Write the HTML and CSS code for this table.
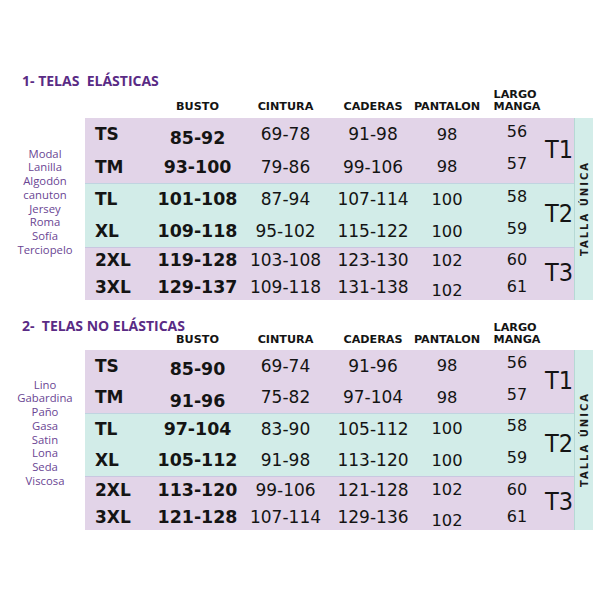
FILE: index.html
```html
<!DOCTYPE html>
<html lang="es">
<head>
<meta charset="utf-8">
<title>Tabla de tallas</title>
<link rel="stylesheet" href="styles.css">
</head>
<body>
<main class="page">
  <section class="sec sec-1">
    <h2 class="title">1-&nbsp;TELAS&nbsp; ELÁSTICAS</h2>
    <div class="sheet">
      <div class="thead">
        <span class="cell c-size"></span>
        <span class="cell c-busto h">BUSTO</span>
        <span class="cell c-cint h">CINTURA</span>
        <span class="cell c-cad h">CADERAS</span>
        <span class="cell c-pant h">PANTALON</span>
        <span class="cell c-largo h"><span class="two">LARGO<br>MANGA</span></span>
        <span class="cell c-t"></span>
      </div>
      <ul class="fabrics">
        <li>Modal</li><li>Lanilla</li><li>Algodón</li><li>canuton</li><li>Jersey</li><li>Roma</li><li>Sofía</li><li>Terciopelo</li>
      </ul>
      <div class="tbody">
        <div class="group g1 purple">
          <span class="cell c-t tl">T1</span>
          <span class="cell c-size">TS</span><span class="cell c-busto low5">85-92</span><span class="cell c-cint">69-78</span><span class="cell c-cad">91-98</span><span class="cell c-pant">98</span><span class="cell c-largo">56</span>
          <span class="cell c-size">TM</span><span class="cell c-busto">93-100</span><span class="cell c-cint">79-86</span><span class="cell c-cad">99-106</span><span class="cell c-pant">98</span><span class="cell c-largo">57</span>
        </div>
        <div class="group g2 teal">
          <span class="cell c-t tl">T2</span>
          <span class="cell c-size">TL</span><span class="cell c-busto">101-108</span><span class="cell c-cint">87-94</span><span class="cell c-cad">107-114</span><span class="cell c-pant">100</span><span class="cell c-largo">58</span>
          <span class="cell c-size">XL</span><span class="cell c-busto">109-118</span><span class="cell c-cint">95-102</span><span class="cell c-cad">115-122</span><span class="cell c-pant">100</span><span class="cell c-largo">59</span>
        </div>
        <div class="group g3 purple">
          <span class="cell c-t tl">T3</span>
          <span class="cell c-size">2XL</span><span class="cell c-busto">119-128</span><span class="cell c-cint">103-108</span><span class="cell c-cad">123-130</span><span class="cell c-pant">102</span><span class="cell c-largo">60</span>
          <span class="cell c-size">3XL</span><span class="cell c-busto">129-137</span><span class="cell c-cint">109-118</span><span class="cell c-cad">131-138</span><span class="cell c-pant low4">102</span><span class="cell c-largo">61</span>
        </div>
      </div>
      <div class="band"><span class="band-text">TALLA ÚNICA</span></div>
    </div>
  </section>

  <section class="sec sec-2">
    <h2 class="title">2-&nbsp; TELAS NO ELÁSTICAS</h2>
    <div class="sheet">
      <div class="thead">
        <span class="cell c-size"></span>
        <span class="cell c-busto h">BUSTO</span>
        <span class="cell c-cint h">CINTURA</span>
        <span class="cell c-cad h">CADERAS</span>
        <span class="cell c-pant h">PANTALON</span>
        <span class="cell c-largo h"><span class="two">LARGO<br>MANGA</span></span>
        <span class="cell c-t"></span>
      </div>
      <ul class="fabrics">
        <li>Lino</li><li>Gabardina</li><li>Paño</li><li>Gasa</li><li>Satin</li><li>Lona</li><li>Seda</li><li>Viscosa</li>
      </ul>
      <div class="tbody">
        <div class="group g1 purple">
          <span class="cell c-t tl">T1</span>
          <span class="cell c-size">TS</span><span class="cell c-busto low5">85-90</span><span class="cell c-cint">69-74</span><span class="cell c-cad">91-96</span><span class="cell c-pant">98</span><span class="cell c-largo">56</span>
          <span class="cell c-size">TM</span><span class="cell c-busto low5">91-96</span><span class="cell c-cint">75-82</span><span class="cell c-cad">97-104</span><span class="cell c-pant">98</span><span class="cell c-largo">57</span>
        </div>
        <div class="group g2 teal">
          <span class="cell c-t tl">T2</span>
          <span class="cell c-size">TL</span><span class="cell c-busto">97-104</span><span class="cell c-cint">83-90</span><span class="cell c-cad">105-112</span><span class="cell c-pant">100</span><span class="cell c-largo">58</span>
          <span class="cell c-size">XL</span><span class="cell c-busto">105-112</span><span class="cell c-cint">91-98</span><span class="cell c-cad">113-120</span><span class="cell c-pant">100</span><span class="cell c-largo">59</span>
        </div>
        <div class="group g3 purple">
          <span class="cell c-t tl">T3</span>
          <span class="cell c-size">2XL</span><span class="cell c-busto">113-120</span><span class="cell c-cint">99-106</span><span class="cell c-cad">121-128</span><span class="cell c-pant">102</span><span class="cell c-largo">60</span>
          <span class="cell c-size">3XL</span><span class="cell c-busto">121-128</span><span class="cell c-cint">107-114</span><span class="cell c-cad">129-136</span><span class="cell c-pant low4">102</span><span class="cell c-largo">61</span>
        </div>
      </div>
      <div class="band"><span class="band-text">TALLA ÚNICA</span></div>
    </div>
  </section>
</main>
</body>
</html>
```

FILE: styles.css
```css
* { box-sizing: border-box; }

html, body {
  margin: 0;
  padding: 0;
  background: #ffffff;
}

body {
  width: 610px;
  height: 610px;
  overflow: hidden;
  font-family: "DejaVu Sans", Verdana, sans-serif;
  color: #141414;
}

.page {
  padding-top: 73px;
}

.sec-2 {
  margin-top: 18px;
}

.title {
  margin: 0;
  padding-left: 22px;
  height: 16px;
  font-family: "Open Sans", "Noto Sans", sans-serif;
  font-weight: 700;
  font-size: 14px;
  line-height: 16px;
  color: #5a2b85;
  white-space: nowrap;
}

.sheet {
  display: grid;
  grid-template-columns: 85px 489px 19px;
  grid-template-areas:
    ". head ."
    "list body band";
}

.sec-2 .sheet {
  margin-top: -12px;
}

.thead {
  grid-area: head;
  display: grid;
  grid-template-columns: 65px 95px 81px 94px 54px 70px 30px;
  align-items: end;
  padding-bottom: 5px;
}

.sec-2 .thead {
  padding-bottom: 4px;
}

.cell {
  display: flex;
  align-items: center;
  justify-content: center;
  white-space: nowrap;
}

.thead .h {
  font-weight: 700;
  font-size: 11.2px;
  line-height: 12px;
  color: #141414;
  padding-bottom: 0;
}

.two {
  display: block;
  text-align: left;
}

.fabrics {
  grid-area: list;
  list-style: none;
  margin: 0;
  padding: 0 0 15px 5px;
  display: flex;
  flex-direction: column;
  justify-content: center;
  align-items: center;
  font-family: "Open Sans", "Noto Sans", sans-serif;
  font-size: 11.3px;
  line-height: 13.7px;
  color: #6a4593;
}

.tbody {
  grid-area: body;
  display: flex;
  flex-direction: column;
}

.group {
  display: grid;
  grid-template-columns: 65px 95px 81px 94px 54px 70px 30px;
  grid-template-rows: 1fr 1fr;
}

.purple { background: #e2d4e8; }
.teal { background: #d2ece8; }

.group + .group {
  box-shadow: inset 0 1px 0 rgba(170, 185, 215, 0.45);
}

.sec-1 .g1 { height: 65px; }
.sec-1 .g2 { height: 64px; }
.sec-1 .g3 { height: 53px; }
.sec-2 .g1 { height: 63px; }
.sec-2 .g2 { height: 63px; }
.sec-2 .g3 { height: 54px; }

.c-size {
  justify-content: flex-start;
  padding-left: 10px;
  font-weight: 700;
  font-size: 17px;
}

.c-busto {
  font-weight: 700;
  font-size: 17.4px;
}

.c-cint,
.c-cad {
  font-size: 17px;
}

.c-pant {
  font-size: 16.3px;
}

.c-largo {
  padding-left: 16px;
  font-size: 16px;
}

.group .c-largo {
  padding-bottom: 6px;
}

.group.g3 .c-largo {
  padding-bottom: 1px;
}

.low5 { padding-top: 7px; }
.low4 { padding-top: 7px; }

.tl {
  grid-column: 7;
  grid-row: 1 / span 2;
  justify-content: flex-start;
  padding-left: 1px;
  padding-bottom: 3px;
  font-family: "Liberation Sans Narrow", "DejaVu Sans Condensed", "Liberation Sans", sans-serif;
  font-stretch: condensed;
  font-size: 25px;
  font-weight: 400;
  color: #141414;
}

.band {
  grid-area: band;
  background: #d3ede9;
  border-left: 1px solid #b6d9d5;
  display: flex;
  align-items: center;
  justify-content: center;
}

.band-text {
  writing-mode: vertical-rl;
  transform: rotate(180deg);
  font-weight: 700;
  font-size: 10px;
  letter-spacing: 2px;
  color: #1a1a1a;
  white-space: nowrap;
}
```
